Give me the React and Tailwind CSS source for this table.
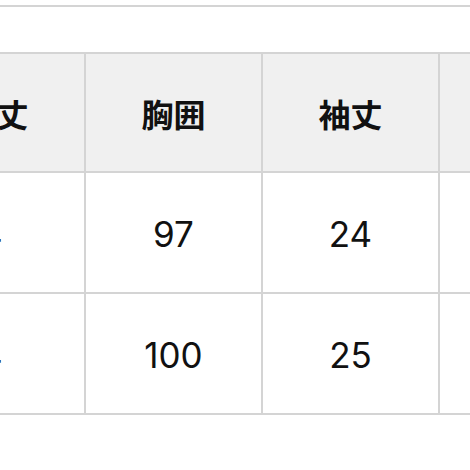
const HEAD = ['着丈', '胸囲', '袖丈', '着丈'];

const ROWS = [
  ['64', '97', '24', '60'],
  ['64', '100', '25', '62'],
];

export default function App() {
  return (
    <div className="w-[470px] h-[470px] overflow-hidden bg-white">
      <div className="mt-[5px] h-[2px] bg-[#d4d4d4]" />

      {/* size table, scrolled so the first column is mostly off screen */}
      <div
        className="mt-[45px] ml-[-93px] w-max grid grid-cols-[175px_175px_175px_175px] gap-[2px] p-[2px] bg-[#d4d4d4] text-[#111]"
        style={{ fontFamily: '"Noto Sans CJK JP", "Noto Sans", sans-serif' }}
      >
        {HEAD.map((h, i) => (
          <div
            key={i}
            className="h-[117px] flex items-center justify-center bg-[#f0f0f0] text-[32px] font-bold"
          >
            {h}
          </div>
        ))}
        {ROWS.map((row, r) =>
          row.map((v, i) => (
            <div
              key={`${r}-${i}`}
              className={`h-[119px] flex items-center justify-center bg-white text-[35px] pt-[4px] ${i === 0 ? 'pr-[32px]' : ''}`}
              style={{ fontFamily: 'Inter, "Noto Sans", sans-serif' }}
            >
              {v}
            </div>
          ))
        )}
      </div>
    </div>
  );
}
